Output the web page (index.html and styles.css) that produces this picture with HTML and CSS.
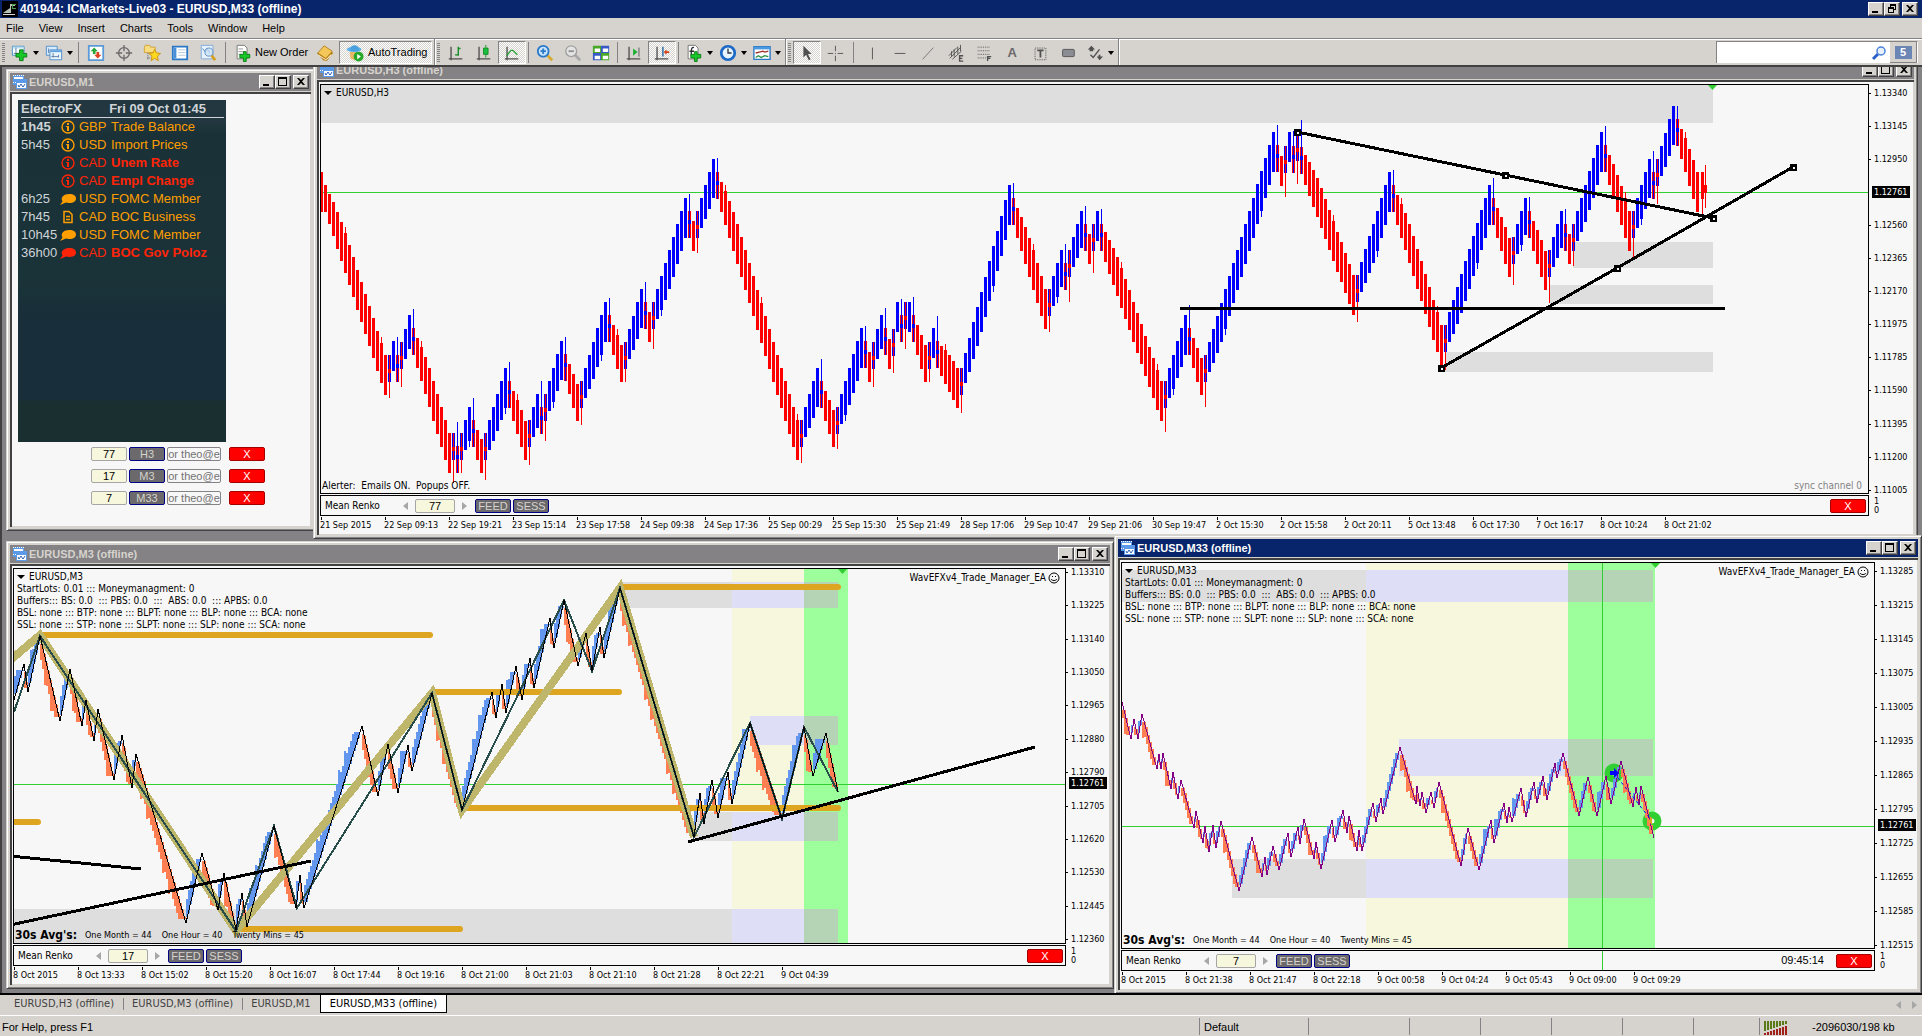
FILE: index.html
```html
<!DOCTYPE html>
<html lang="en">
<head>
<meta charset="utf-8">
<title>401944: ICMarkets-Live03 - EURUSD,M33 (offline)</title>
<link rel="stylesheet" href="styles.css">
</head>
<body>
<svg class="defs" aria-hidden="true">
  <symbol id="i-chart" viewBox="0 0 16 16"><path fill="#5a9ae8" d="M1 1h11v4h3v10H4v-4H1z"/><path fill="#fff" d="M2 3h9v2H2zM5 9h9v5H5z"/><path fill="none" stroke="#2a62b8" d="M6 11l1 2 2-3 2 3 2-3"/><path stroke="#fff" stroke-dasharray="1 1" d="M1 1.500h11M1 8.500h4"/></symbol>
  <symbol id="i-min" viewBox="0 0 12 10"><path d="M2 7h6v2H2z"/></symbol>
  <symbol id="i-max" viewBox="0 0 12 10"><path fill-rule="evenodd" d="M1 0h9v9H1zM2 2v6h7V2z"/></symbol>
  <symbol id="i-restore" viewBox="0 0 12 10"><path fill-rule="evenodd" d="M4 0h6v6H8v3H2V3h2zM5 2v1h3v2h1V2zM3 5v3h4V5z"/></symbol>
  <symbol id="i-close" viewBox="0 0 12 10"><path d="M2 1h2l2 2 2-2h2L7 4.500 10 8H8L6 6 4 8H2l3-3.500z"/></symbol>
  <symbol id="i-info" viewBox="0 0 16 16"><circle cx="8" cy="8" r="6" fill="none" stroke="currentColor" stroke-width="1.400"/><path fill="currentColor" d="M7 4h2v2H7zM6 7h3v5H7V8H6z"/></symbol>
  <symbol id="i-talk" viewBox="0 0 16 16"><path fill="currentColor" d="M9 3c5 0 7 2 7 4.500S14 12 9 12c-1 0-2-.1-3-.4L0 14l2.500-3.500C0 6.500 4 3 9 3z"/></symbol>
  <symbol id="i-doc" viewBox="0 0 16 16"><path fill="none" stroke="currentColor" stroke-width="1.500" d="M4 2.500h5l3 3v8H4zM6 7.500h4M6 10.500h4"/></symbol>
  <symbol id="i-smile" viewBox="0 0 12 12"><circle cx="6" cy="6" r="5" fill="none" stroke="#000"/><path d="M4 4h1v1H4zM7 4h1v1H7z"/><path fill="none" stroke="#000" d="M3 7c1 2 5 2 6 0"/></symbol>
</svg>

<header class="titlebar">
  <svg class="logo" viewBox="0 0 16 16"><path fill="#000" d="M0 0h16v16H0z"/><path fill="#b8c4b8" d="M1 12l7-5v5zM8 3h5v2H9v7H8z"/><path fill="#48a048" d="M10 3h4v1h-3v3h3v1h-4z"/><path stroke="#d8d8d8" d="M1 13.500h12"/></svg>
  <h1>401944: ICMarkets-Live03 - EURUSD,M33 (offline)</h1>
  <div class="caps">
    <button aria-label="Minimize"><svg><use href="#i-min"/></svg></button><button aria-label="Restore"><svg><use href="#i-restore"/></svg></button><button aria-label="Close" class="x"><svg><use href="#i-close"/></svg></button>
  </div>
</header>

<nav class="menu"><a href="#">File</a><a href="#">View</a><a href="#">Insert</a><a href="#">Charts</a><a href="#">Tools</a><a href="#">Window</a><a href="#">Help</a></nav>

<div class="toolbar">
  <div class="group standard">
    <i class="grip"></i>
    <button class="tb drop" aria-label="New chart"><svg viewBox="0 0 20 20"><path fill="#fff" stroke="#3a8ac0" d="M1.500 2.500h13v10h-13z"/><path fill="#bcdcf4" d="M2 3h12v2H2z"/><path fill="none" stroke="#4a7aa0" d="M5.500 4v7M3 10.500h6"/><path fill="#18c828" stroke="#0a7a14" d="M9.500 6.500h4v4h4v4h-4v4h-4v-4h-4v-4h4z"/></svg></button>
    <button class="tb drop" aria-label="Profiles"><svg viewBox="0 0 20 20"><path fill="#d8ecfc" stroke="#4a8ac8" d="M1.500 2.500h12v10h-12z"/><path fill="#e8f4fe" stroke="#4a8ac8" d="M5.500 6.500h13v11h-13z"/><path fill="#5aa0e0" d="M6 7h12v2H6z"/><path fill="none" stroke="#5a7aa0" d="M4 5v5M9 15V10m-2 4h8m0-2v3"/></svg></button>
    <i class="sep"></i>
    <button class="tb" aria-label="Market Watch"><svg viewBox="0 0 20 20"><path fill="#fff" stroke="#5a9ad8" stroke-width="2" d="M2 2h16v16H2z"/><path fill="#28a838" d="M4 8l4-4 4 4H9.500v3h-3V8z"/><path fill="#e04020" d="M8 12l4 4 4-4h-2.500V9h-3v3z"/></svg></button>
    <button class="tb" aria-label="Data Window"><svg viewBox="0 0 20 20"><circle cx="10" cy="10" r="6" fill="none" stroke="#6b696b" stroke-width="1.500"/><path stroke="#6b696b" stroke-width="1.500" d="M10 1v7M10 12v7M1 10h7M12 10h7"/></svg></button>
    <button class="tb" aria-label="Navigator"><svg viewBox="0 0 20 20"><path fill="#f8dc80" stroke="#d0a030" d="M1.500 3.500l1-2h5l1 2h5v6h-12z"/><path stroke="#505050" stroke-dasharray="1 1" d="M5.500 10v8M5 15.500h4"/><path fill="#ffd820" stroke="#c89010" d="M13 6l2 4 4.500.5-3.500 3 1 5-4-2.500-4 2.500 1-5-3.500-3L11 10z"/></svg></button>
    <button class="tb" aria-label="Terminal"><svg viewBox="0 0 20 20"><path fill="#fff" stroke="#2a78c8" stroke-width="2" d="M2 3h16v14H2z"/><path fill="#4a90d8" d="M3 4h3v12H3z"/><path stroke="#b0c4d8" d="M8 6.500h8M8 9.500h8M8 12.500h8"/></svg></button>
    <button class="tb" aria-label="Strategy Tester"><svg viewBox="0 0 20 20"><path fill="#e8f2fc" stroke="#7aa8d8" d="M2.500 1.500h13v15h-13z"/><path fill="none" stroke="#4a80b8" d="M4 5l3 4 2-4 3 5"/><circle cx="11" cy="9" r="4.500" fill="#c8e0f8" fill-opacity=".7" stroke="#6090c0"/><path stroke="#d8a020" stroke-width="3" d="M14 13l4 5"/></svg></button>
    <i class="sep"></i>
    <button class="tb text"><svg viewBox="0 0 20 20"><path fill="#fff" stroke="#707070" d="M3.500 1.500h8l3 3v12h-11z"/><path stroke="#909090" d="M5 5.500h5M5 8.500h7M5 11.500h4"/><path fill="#18c828" stroke="#0a7a14" d="M10.500 8.500h3v3h4v4h-4v4h-3v-4h-4v-4h4z"/></svg>New Order</button>
    <button class="tb" aria-label="MetaEditor"><svg viewBox="0 0 20 20"><path fill="#b87c10" d="M1 10l7 8 4 1 7-9-2-2z"/><path fill="#fff0c8" d="M3 12l8 5 6-6v2l-6 5-8-5z"/><path fill="#f4c858" stroke="#b08020" d="M2 10l7-8 9 6-7 8z"/></svg></button>
    <button class="tb text pressed auto" aria-pressed="true"><svg viewBox="0 0 20 20"><ellipse cx="9" cy="6" rx="8" ry="3" fill="#5ab0e8"/><path fill="#48a0e0" d="M5 5c0-5 9-5 9 0v3H5z"/><path fill="#e8b868" d="M4 9h10l-1 6-4 3-4-2z"/><circle cx="14" cy="14" r="5.500" fill="#28a828"/><path fill="#fff" d="M12.500 11v6l4-3z"/></svg>AutoTrading</button>
  </div>
  <div class="group">
    <i class="grip"></i>
    <button class="tb" aria-label="Bar chart"><svg viewBox="0 0 20 20"><path fill="none" stroke="#505050" stroke-width="1.500" d="M4.500 3v15M2 16.500h15"/><path fill="none" stroke="#108a20" stroke-width="1.500" d="M12.500 3v10M9 12h4M12 5h3"/></svg></button>
    <button class="tb" aria-label="Candlesticks"><svg viewBox="0 0 20 20"><path fill="none" stroke="#505050" stroke-width="1.500" d="M4.500 3v15M2 16.500h15"/><path fill="#18c040" stroke="#108a20" d="M9.500 4.500h5v7h-5zM12 1v3M12 12v3"/></svg></button>
    <button class="tb pressed" aria-label="Line chart" aria-pressed="true"><svg viewBox="0 0 20 20"><path fill="none" stroke="#505050" stroke-width="1.500" d="M4.500 3v15M2 16.500h15"/><path fill="none" stroke="#28a038" stroke-width="1.500" d="M4 13l5-6h2l5 5"/></svg></button>
    <i class="sep"></i>
    <button class="tb" aria-label="Zoom in"><svg viewBox="0 0 20 20"><path stroke="#d8a830" stroke-width="3" d="M12 12l6 6"/><circle cx="8" cy="8" r="6" fill="#c8e4fc" stroke="#2a78c8" stroke-width="2"/><path stroke="#2a78c8" stroke-width="2" d="M5 8h6M8 5v6"/></svg></button>
    <button class="tb" aria-label="Zoom out"><svg viewBox="0 0 20 20"><path stroke="#a8a8a8" stroke-width="3" d="M12 12l6 6"/><circle cx="8" cy="8" r="6" fill="#e4e4e4" stroke="#a0a0a0" stroke-width="1.500"/><path stroke="#909090" stroke-width="2" d="M5 8h6"/></svg></button>
    <button class="tb" aria-label="Tile windows"><svg viewBox="0 0 20 20"><path fill="#48a828" d="M1 2h9v8H1zM10 10h9v8h-9z"/><path fill="#3858c8" d="M10 2h9v8h-9zM1 10h9v8H1z"/><path fill="#fff" d="M3 5h6v4H3zM12 5h6v4h-6zM3 13h6v4H3zM12 13h6v4h-6z"/></svg></button>
    <i class="sep"></i>
    <button class="tb" aria-label="Auto scroll"><svg viewBox="0 0 20 20"><path fill="none" stroke="#505050" stroke-width="1.500" d="M4.500 3v15M2 16.500h15"/><path fill="#18b030" d="M9 5v8l5-4z"/><path stroke="#505050" d="M15.500 4v10"/></svg></button>
    <button class="tb pressed" aria-label="Chart shift" aria-pressed="true"><svg viewBox="0 0 20 20"><path fill="none" stroke="#505050" stroke-width="1.500" d="M4.500 3v15M2 16.500h15"/><path stroke="#1a60a0" stroke-width="1.500" d="M11 3v11"/><path fill="#d04010" d="M12 9l3-3v2h3v2h-3v2z"/></svg></button>
    <i class="sep"></i>
    <button class="tb drop" aria-label="Indicators"><svg viewBox="0 0 20 20"><path fill="#fff" stroke="#707070" d="M3.500 1.500h8l3 3v12h-11z"/><path fill="none" stroke="#303030" stroke-width="1.500" d="M10 4c-3-1-3 2-3 9M5 8h5"/><path fill="#18c828" stroke="#0a7a14" d="M10.500 8.500h3v3h4v4h-4v4h-3v-4h-4v-4h4z"/></svg></button>
    <button class="tb drop" aria-label="Periods"><svg viewBox="0 0 20 20"><circle cx="10" cy="10" r="7.500" fill="#e8f4fe" stroke="#1a68c8" stroke-width="3"/><path fill="none" stroke="#303840" stroke-width="1.500" d="M10 5v5h4"/></svg></button>
    <button class="tb drop" aria-label="Templates"><svg viewBox="0 0 20 20"><path fill="#fff" stroke="#2a78c8" stroke-width="1.500" d="M1 3h18v14H1z"/><path fill="#4a98e0" d="M1 3h18v3H1z"/><path fill="none" stroke="#a03020" stroke-width="1.500" d="M3 10l4-1 4-1 2 1 4-1"/><path fill="none" stroke="#28903a" stroke-width="1.500" d="M3 15l3-2 3 2 4-2 4 1"/></svg></button>
  </div>
  <div class="group drawing">
    <i class="grip"></i>
    <button class="tb pressed" aria-label="Cursor" aria-pressed="true"><svg viewBox="0 0 20 20"><path fill="#505050" d="M6 2l9 9h-4l3 6-2 1-3-6-3 3z"/></svg></button>
    <button class="tb" aria-label="Crosshair"><svg viewBox="0 0 20 20"><path stroke="#505050" d="M10.500 2v6M10.500 13v6M2 10.500h6M13 10.500h6M10 10.500h1"/></svg></button>
    <i class="sep"></i>
    <button class="tb" aria-label="Vertical line"><svg viewBox="0 0 20 20"><path stroke="#505050" d="M10.500 4v13"/></svg></button>
    <button class="tb" aria-label="Horizontal line"><svg viewBox="0 0 20 20"><path stroke="#505050" d="M4 10.500h12"/></svg></button>
    <button class="tb" aria-label="Trendline"><svg viewBox="0 0 20 20"><path stroke="#707070" d="M4 17L16 4"/></svg></button>
    <button class="tb" aria-label="Equidistant channel"><svg viewBox="0 0 20 20"><path fill="none" stroke="#505050" d="M2 13L11 4M3 16L15 4M6 17L16 8M5 8v6M8 6v8M12 3v8M15 1v7"/><path fill="none" stroke="#505050" stroke-width="1.500" d="M18 13h-4v6h4M14 16h3"/></svg></button>
    <button class="tb" aria-label="Fibonacci"><svg viewBox="0 0 20 20"><path stroke="#505050" stroke-dasharray="1 1" d="M3 3.500h14M3 7.500h14M3 11.500h14M3 15.500h9"/><path fill="none" stroke="#505050" stroke-width="1.500" d="M18 14h-4v5M14 16h3"/></svg></button>
    <button class="tb letter" aria-label="Text">A</button>
    <button class="tb" aria-label="Text label"><svg viewBox="0 0 20 20"><path fill="none" stroke="#505050" stroke-dasharray="1 1" d="M4.500 4.500h12v13h-12z"/><path stroke="#505050" stroke-width="2" d="M7 7h7M10.500 7v8"/></svg></button>
    <button class="tb" aria-label="Rectangle"><svg viewBox="0 0 20 20"><rect x="4" y="6" width="13" height="8" rx="1" fill="#8c8c94" stroke="#505050"/></svg></button>
    <button class="tb drop" aria-label="Arrows"><svg viewBox="0 0 20 20"><path fill="#505050" d="M6 2l4 4H8v2H4V6H2zM12 14h2v-2h2v2h3l-4 4z"/><path fill="none" stroke="#505050" stroke-width="1.500" d="M5 12l3 3 7-9"/></svg></button>
  </div>
  <div class="search">
    <input type="text" aria-label="Search">
    <svg viewBox="0 0 16 16"><path stroke="#2a60c8" stroke-width="3" d="M2 14l5-5"/><circle cx="10" cy="6" r="4" fill="#e8f2fe" stroke="#4a80d8" stroke-width="1.500"/></svg>
    <button class="mail" aria-label="Messages"><span>5</span></button>
  </div>
</div>

<main class="mdi">
  <section class="win win-m1">
    <header><svg class="wi"><use href="#i-chart"/></svg><h2>EURUSD,M1</h2>
      <div class="caps"><button aria-label="Minimize"><svg><use href="#i-min"/></svg></button><button aria-label="Maximize"><svg><use href="#i-max"/></svg></button><button aria-label="Close" class="x"><svg><use href="#i-close"/></svg></button></div></header>
    <div class="client">
      <div class="news">
        <div class="news-head"><span>ElectroFX</span><span>Fri 09 Oct 01:45</span></div>
        <table>
          <tr class="mid"><th>1h45</th><td><svg><use href="#i-info"/></svg></td><td>GBP</td><td>Trade Balance</td></tr>
          <tr class="mid"><td>5h45</td><td><svg><use href="#i-info"/></svg></td><td>USD</td><td>Import Prices</td></tr>
          <tr class="high"><td></td><td><svg><use href="#i-info"/></svg></td><td>CAD</td><td>Unem Rate</td></tr>
          <tr class="high"><td></td><td><svg><use href="#i-info"/></svg></td><td>CAD</td><td>Empl Change</td></tr>
          <tr class="mid"><td>6h25</td><td><svg><use href="#i-talk"/></svg></td><td>USD</td><td>FOMC Member</td></tr>
          <tr class="mid"><td>7h45</td><td><svg><use href="#i-doc"/></svg></td><td>CAD</td><td>BOC Business</td></tr>
          <tr class="mid"><td>10h45</td><td><svg><use href="#i-talk"/></svg></td><td>USD</td><td>FOMC Member</td></tr>
          <tr class="high"><td>36h00</td><td><svg><use href="#i-talk"/></svg></td><td>CAD</td><td>BOC Gov Poloz</td></tr>
        </table>
      </div>
      <div class="feeds">
        <div><input class="num" aria-label="H3 size" value="77"><button class="dark">H3</button><input class="addr" aria-label="H3 alert" value="or theo@e"><button class="red">X</button></div>
        <div><input class="num" aria-label="M3 size" value="17"><button class="dark">M3</button><input class="addr" aria-label="M3 alert" value="or theo@e"><button class="red">X</button></div>
        <div><input class="num" aria-label="M33 size" value="7"><button class="dark">M33</button><input class="addr" aria-label="M33 alert" value="or theo@e"><button class="red">X</button></div>
      </div>
    </div>
  </section>

  <section class="win win-h3">
    <header><svg class="wi"><use href="#i-chart"/></svg><h2>EURUSD,H3 (offline)</h2>
      <div class="caps"><button aria-label="Minimize"><svg><use href="#i-min"/></svg></button><button aria-label="Maximize"><svg><use href="#i-max"/></svg></button><button aria-label="Close" class="x"><svg><use href="#i-close"/></svg></button></div></header>
    <div class="client chart">
      <div class="plot">
        <svg id="plot-h3"></svg>
        <div class="sym">EURUSD,H3</div>
        <div class="foot"><span>Alerter:&nbsp; Emails ON.&nbsp; Popups OFF.</span></div>
        <div class="sync">sync channel 0</div>
      </div>
      <ol class="axis"><li>1.13340</li><li>1.13145</li><li>1.12950</li><li class="now">1.12761</li><li>1.12560</li><li>1.12365</li><li>1.12170</li><li>1.11975</li><li>1.11785</li><li>1.11590</li><li>1.11395</li><li>1.11200</li><li>1.11005</li></ol>
      <div class="sub"><label for="n1">Mean Renko</label><button class="step prev" aria-label="Less"></button><input id="n1" class="num" value="77"><button class="step next" aria-label="More"></button><button class="dark">FEED</button><button class="dark">SESS</button><button class="red">X</button></div>
      <div class="scale"><span>1</span><span>0</span></div>
      <ol class="dates"><li>21 Sep 2015</li><li>22 Sep 09:13</li><li>22 Sep 19:21</li><li>23 Sep 15:14</li><li>23 Sep 17:58</li><li>24 Sep 09:38</li><li>24 Sep 17:36</li><li>25 Sep 00:29</li><li>25 Sep 15:30</li><li>25 Sep 21:49</li><li>28 Sep 17:06</li><li>29 Sep 10:47</li><li>29 Sep 21:06</li><li>30 Sep 19:47</li><li>2 Oct 15:30</li><li>2 Oct 15:58</li><li>2 Oct 20:11</li><li>5 Oct 13:48</li><li>6 Oct 17:30</li><li>7 Oct 16:17</li><li>8 Oct 10:24</li><li>8 Oct 21:02</li></ol>
    </div>
  </section>

  <section class="win win-m3">
    <header><svg class="wi"><use href="#i-chart"/></svg><h2>EURUSD,M3 (offline)</h2>
      <div class="caps"><button aria-label="Minimize"><svg><use href="#i-min"/></svg></button><button aria-label="Maximize"><svg><use href="#i-max"/></svg></button><button aria-label="Close" class="x"><svg><use href="#i-close"/></svg></button></div></header>
    <div class="client chart">
      <div class="plot">
        <svg id="plot-m3"></svg>
        <div class="sym">EURUSD,M3</div>
        <div class="notes">StartLots: 0.01 ::: Moneymanagment: 0<br>Buffers::: BS: 0.0 &nbsp;::: PBS: 0.0 &nbsp;::: &nbsp;ABS: 0.0 &nbsp;::: APBS: 0.0<br>BSL: none ::: BTP: none ::: BLPT: none ::: BLP: none ::: BCA: none<br>SSL: none ::: STP: none ::: SLPT: none ::: SLP: none ::: SCA: none</div>
        <div class="ea">WavEFXv4_Trade_Manager_EA<svg><use href="#i-smile"/></svg></div>
        <div class="foot avg"><b>30s Avg's:</b><span>One Month = 44</span><span>One Hour = 40</span><span>Twenty Mins = 45</span></div>
      </div>
      <ol class="axis"><li>1.13310</li><li>1.13225</li><li>1.13140</li><li>1.13050</li><li>1.12965</li><li>1.12880</li><li>1.12790</li><li>1.12705</li><li>1.12620</li><li>1.12530</li><li>1.12445</li><li>1.12360</li><li class="now mark">1.12761</li></ol>
      <div class="sub"><label for="n2">Mean Renko</label><button class="step prev" aria-label="Less"></button><input id="n2" class="num" value="17"><button class="step next" aria-label="More"></button><button class="dark">FEED</button><button class="dark">SESS</button><button class="red">X</button></div>
      <div class="scale"><span>1</span><span>0</span></div>
      <ol class="dates"><li>8 Oct 2015</li><li>8 Oct 13:33</li><li>8 Oct 15:02</li><li>8 Oct 15:20</li><li>8 Oct 16:07</li><li>8 Oct 17:44</li><li>8 Oct 19:16</li><li>8 Oct 21:00</li><li>8 Oct 21:03</li><li>8 Oct 21:10</li><li>8 Oct 21:28</li><li>8 Oct 22:21</li><li>9 Oct 04:39</li></ol>
    </div>
  </section>

  <section class="win win-m33 active">
    <header><svg class="wi"><use href="#i-chart"/></svg><h2>EURUSD,M33 (offline)</h2>
      <div class="caps"><button aria-label="Minimize"><svg><use href="#i-min"/></svg></button><button aria-label="Maximize"><svg><use href="#i-max"/></svg></button><button aria-label="Close" class="x"><svg><use href="#i-close"/></svg></button></div></header>
    <div class="client chart">
      <div class="plot">
        <svg id="plot-m33"></svg>
        <div class="sym">EURUSD,M33</div>
        <div class="notes">StartLots: 0.01 ::: Moneymanagment: 0<br>Buffers::: BS: 0.0 &nbsp;::: PBS: 0.0 &nbsp;::: &nbsp;ABS: 0.0 &nbsp;::: APBS: 0.0<br>BSL: none ::: BTP: none ::: BLPT: none ::: BLP: none ::: BCA: none<br>SSL: none ::: STP: none ::: SLPT: none ::: SLP: none ::: SCA: none</div>
        <div class="ea">WavEFXv4_Trade_Manager_EA<svg><use href="#i-smile"/></svg></div>
        <div class="foot avg"><b>30s Avg's:</b><span>One Month = 44</span><span>One Hour = 40</span><span>Twenty Mins = 45</span></div>
      </div>
      <ol class="axis"><li>1.13285</li><li>1.13215</li><li>1.13145</li><li>1.13075</li><li>1.13005</li><li>1.12935</li><li>1.12865</li><li>1.12795</li><li>1.12725</li><li>1.12655</li><li>1.12585</li><li>1.12515</li><li class="now mark">1.12761</li></ol>
      <div class="sub lined"><label for="n3">Mean Renko</label><button class="step prev" aria-label="Less"></button><input id="n3" class="num" value="7"><button class="step next" aria-label="More"></button><button class="dark">FEED</button><button class="dark">SESS</button><time>09:45:14</time><button class="red">X</button></div>
      <div class="scale"><span>1</span><span>0</span></div>
      <ol class="dates"><li>8 Oct 2015</li><li>8 Oct 21:38</li><li>8 Oct 21:47</li><li>8 Oct 22:18</li><li>9 Oct 00:58</li><li>9 Oct 04:24</li><li>9 Oct 05:43</li><li>9 Oct 09:00</li><li>9 Oct 09:29</li></ol>
    </div>
  </section>
</main>

<nav class="tabs"><a href="#">EURUSD,H3 (offline)</a><a href="#">EURUSD,M3 (offline)</a><a href="#">EURUSD,M1</a><a href="#" class="on">EURUSD,M33 (offline)</a><span class="arrows"><i class="step prev"></i><i class="step next"></i></span></nav>

<footer class="status">
  <span class="help">For Help, press F1</span><span class="w109">Default</span><span class="w101"></span><span class="w71"></span><span class="w71"></span><span class="w71"></span><span class="w71"></span><span class="w66"></span>
  <span class="net"><svg viewBox="0 0 24 14"><path fill="#5a7a18" d="M0 0h2v10H0zM3 0h2v9H3zM6 0h2v8H6zM9 0h2v7H9zM12 0h2v6h-2zM15 0h2v5h-2zM18 0h2v4h-2zM21 0h2v3h-2z"/><path fill="#a02018" d="M0 12h2v2H0zM3 11h2v3H3zM6 10h2v4H6zM9 9h2v5H9zM12 8h2v6h-2zM15 7h2v7h-2zM18 6h2v8h-2zM21 5h2v9h-2z"/></svg>-2096030/198 kb</span>
</footer>
<script src="charts.js"></script>
</body>
</html>
```
FILE: styles.css
```css
:root {
  --face: #d6d3ce;
  --shade: #848284;
  --dark: #424142;
  --navy: #08246b;
  --paper: #f7f7f7;
  --ui: "Liberation Sans", Arial, sans-serif;
  --narrow: Tahoma, "DejaVu Sans Condensed", sans-serif;
}
* { box-sizing: border-box; }
body {
  margin: 0;
  height: 100vh;
  display: flex;
  flex-direction: column;
  overflow: hidden;
  background: var(--face);
  font: 11px/13px var(--ui);
  color: #000;
}
h1, h2, ol { margin: 0; padding: 0; list-style: none; }
h1 { font-size: 12px; line-height: 15px; }
h2 { font-size: 11px; line-height: 15px; }
a { color: inherit; text-decoration: none; }
button, input { font: inherit; margin: 0; padding: 0; border: 0; border-radius: 0; color: inherit; }
button { background: none; }
svg { display: block; flex: none; }
.defs { position: absolute; width: 0; height: 0; }

/* title bar */
.titlebar { flex: none; height: 18px; display: flex; align-items: center; background: var(--navy); color: #fff; padding: 0 4px 0 2px; }
.logo { width: 16px; height: 16px; margin-right: 2px; }
.caps { margin-left: auto; display: flex; }
.caps button {
  width: 16px; height: 14px;
  background: var(--face);
  border: 1px solid;
  border-color: #fff var(--dark) var(--dark) #fff;
  box-shadow: inset -1px -1px var(--shade);
  color: #000;
}
.caps svg { width: 12px; height: 10px; margin: 1px; }
.caps .x { margin-left: 2px; }

.menu { flex: none; height: 20px; display: flex; align-items: center; gap: 15px; padding-left: 6px; }

/* toolbar */
.toolbar { flex: none; height: 27px; display: flex; border-top: 1px solid var(--shade); box-shadow: inset 0 1px #fff; }
.group { display: flex; align-items: center; padding: 1px 2px 0 0; border-right: 1px solid var(--shade); box-shadow: 1px 0 #fff; }
.grip { width: 3px; height: 20px; margin: 0 2px; background: repeating-linear-gradient(var(--shade) 0 1px, transparent 1px 2px); }
.sep { width: 1px; height: 21px; margin: 0 2px; background: var(--shade); }
.standard .sep { margin: 0 3px; }
.drawing .sep { margin: 0 4px; }
.tb { width: 28px; height: 23px; display: flex; align-items: center; justify-content: center; }
.tb svg { width: 18px; height: 18px; }
.drop { width: 34px; justify-content: flex-start; gap: 4px; padding-left: 4px; }
.drop::after { content: ""; border: 3px solid transparent; border-top: 4px solid #000; border-bottom: 0; }
.text { width: auto; gap: 3px; padding: 0 3px 0 5px; }
.auto { width: 93px; gap: 4px; }
.letter { font-weight: bold; font-size: 13px; color: #6b696b; }
.pressed {
  border: 1px solid;
  border-color: var(--shade) #fff #fff var(--shade);
  background: repeating-conic-gradient(#fff 0 25%, var(--face) 0 50%) 0 0 / 2px 2px;
}
.search { width: 202px; margin: 2px 4px 2px auto; display: flex; align-items: center; background: #fff; border: 1px solid var(--shade); border-right-color: #fff; border-bottom: 0; }
.search input { flex: 1; min-width: 0; background: none; outline: 0; }
.search svg { width: 16px; height: 16px; margin: 0 3px; }
.mail { width: 27px; height: 21px; background: var(--face); display: grid; place-items: center; border-right: 1px solid var(--shade); border-bottom: 1px solid var(--shade); }
.mail span { width: 17px; height: 13px; background: #6b86b5; color: #fff; font-weight: bold; }

/* desktop */
.mdi { flex: 1; min-height: 0; position: relative; overflow: hidden; background: var(--shade); border-top: 2px solid var(--dark); border-left: 2px solid var(--dark); }
.win {
  position: absolute;
  display: flex;
  flex-direction: column;
  padding: 3px;
  background: var(--face);
  border: 1px solid;
  border-color: var(--face) var(--dark) var(--dark) var(--face);
  box-shadow: inset 1px 1px #fff, inset -1px -1px var(--shade);
}
.win > header { flex: none; height: 18px; margin-bottom: 1px; display: flex; align-items: center; padding: 0 2px; background: var(--shade); color: var(--face); }
.win.active > header { background: var(--navy); color: #fff; }
.wi { width: 16px; height: 16px; margin-right: 1px; }
.win-m1 { left: 4px; top: 2px; width: 309px; height: 462px; }
.win-h3 { left: 311px; top: -10px; right: 4px; height: 482px; }
.win-m3 { left: 4px; top: 474px; width: 1108px; bottom: 4px; }
.win-m33 { left: 1112px; top: 468px; right: 0; bottom: -1px; }
.client {
  flex: 1; min-height: 0;
  background: var(--paper);
  border: solid var(--dark);
  border-width: 2px 0 0 2px;
  box-shadow: inset -1px -1px #d6d3ce;
}
.win-m1 .client { padding: 6px 0 0 6px; }

/* news calendar */
.news { width: 208px; height: 342px; padding: 0 2px 0 3px; color: #d0d4d8; background: linear-gradient(#22373f 0 22px, #1a3237 34px, #1a3338 180px, #182e3a 220px, #182e3a 300px, #1a2f2f 301px); font-size: 13px; line-height: 18px; }
.news-head { display: flex; justify-content: space-between; padding-right: 18px; height: 18px; border-bottom: 1px solid #d0d4d8; font-weight: bold; }
.news table { border-collapse: collapse; table-layout: fixed; }
.news tr { height: 18px; }
.news td, .news th { padding: 0; text-align: left; white-space: nowrap; height: 18px; }
.news svg { width: 16px; height: 16px; }
.news td:nth-child(2) { width: 19px; }
.news tr > :first-child { width: 39px; color: #d0d4d8; }
.news td:nth-child(3) { width: 32px; }
.mid { color: #ff9e00; }
.high { color: #ff2408; }
.high td:last-child { font-weight: bold; }
.feeds { display: grid; gap: 8px; padding: 5px 0 0 73px; }
.feeds > div { display: flex; gap: 2px; }
.feeds .red { margin-left: 6px; }
.num, .addr, .dark, .red { height: 14px; line-height: 12px; border: 1px solid; border-radius: 2px; text-align: center; }
.num { width: 36px; background: #f7f7de; border-color: #a5a6a5; }
.addr { width: 54px; background: none; border-color: #848284; color: #737173; }
.dark { width: 36px; background: #6b696b; border-color: #000084; color: #d6d3ce; }
.red { width: 36px; background: #f00; border-color: #a50000; color: #fff; }

/* chart windows */
.chart { display: grid; grid-template-columns: minmax(0, 1fr) 42px; grid-template-rows: minmax(0, 1fr) 21px 17px; row-gap: 1px; padding: 2px 1px 1px 1px; font: 10px/13px var(--narrow); }
.win-h3 .chart { grid-template-columns: minmax(0, 1fr) 44px; }
.win-m3 .chart { grid-template-columns: minmax(0, 1fr) 43px; }
.plot { position: relative; border: 1px solid #000; min-height: 0; }
.plot > svg { width: 100%; height: 100%; overflow: hidden; }
.sym { position: absolute; left: 3px; top: 1px; display: flex; align-items: center; gap: 4px; }
.sym::before { content: ""; border: 4px solid transparent; border-top: 4px solid #000; border-bottom: 0; }
.notes { position: absolute; left: 3px; top: 14px; line-height: 12px; white-space: nowrap; }
.ea { position: absolute; right: 5px; top: 2px; display: flex; align-items: center; gap: 2px; }
.ea svg { width: 12px; height: 12px; }
.foot { position: absolute; left: 1px; bottom: 1px; display: flex; align-items: center; gap: 10px; white-space: nowrap; }
.avg { font-size: 9px; }
.foot b { font: bold 12px/13px var(--narrow); margin-right: -2px; }
.sync { position: absolute; right: 6px; bottom: 1px; color: #848284; }
.axis { position: relative; display: flex; flex-direction: column; justify-content: space-between; padding-top: 3px; margin-bottom: -3px; font-size: 9px; }
.win-m3 .axis { padding-top: 0; margin: -2px 0 -2px; }
.axis li { display: flex; align-items: center; gap: 3px; height: 13px; }
.axis li::before { content: ""; width: 2px; height: 1px; background: #000; }
.axis .now { background: #000; color: #fff; margin-left: 3px; width: 38px; padding-left: 2px; height: 12px; }
.axis .now::before { display: none; }
.axis .mark { position: absolute; top: 211px; left: 0; }
.win-m33 .axis .mark { top: 257px; }
.sub { display: flex; align-items: center; border: 1px solid #000; padding: 0 2px 0 4px; font: 11px/13px var(--ui); }
.sub label { width: 78px; font: 10px/13px var(--narrow); }
.sub .num { width: 40px; margin: 0 7px; }
.sub .next { margin-right: 8px; }
.sub .dark { margin-right: 2px; }
.sub .red { margin-left: auto; }
.sub time { margin-left: auto; margin-right: 12px; }
.sub time + .red { margin-left: 0; }
.lined { background: linear-gradient(#31cf31, #31cf31) 480px 0 / 1px 100% no-repeat; }
.step { width: 5px; height: 8px; border: solid transparent; border-width: 4px 5px; }
.prev { border-right-color: #a5a6a5; border-left: 0; }
.next { border-left-color: #a5a6a5; border-right: 0; }
.scale { display: grid; align-content: center; padding-left: 5px; font-size: 9px; line-height: 9px; }
.dates { grid-column: 1 / -1; display: flex; font-size: 9px; }
.dates li { flex: none; width: 64px; padding-top: 2px; white-space: nowrap; background: linear-gradient(#000, #000) 1px 0 / 1px 3px no-repeat; }

/* chart tabs and status bar */
.tabs { flex: none; height: 22px; display: flex; border-top: 2px solid #000; box-shadow: 0 -1px #fff; padding: 0 5px; color: var(--dark); font: 11px/13px var(--narrow); }
.tabs a { padding: 2px 9px; height: 18px; }
.tabs a + a:not(.on) { background: linear-gradient(var(--shade), var(--shade)) 0 3px / 1px 12px no-repeat; }
.tabs .on { background: #fff; color: #000; border: 1px solid #000; border-top: 0; }
.arrows { margin-left: auto; display: flex; gap: 11px; align-items: center; }
.status { flex: none; height: 21px; display: flex; border-top: 1px solid #fff; line-height: 15px; padding-left: 2px; }
.status span { padding: 4px 0 0 4px; border-left: 1px solid var(--shade); margin: 2px 0 1px; line-height: 11px; }
.status .help { flex: 1; border: 0; padding-left: 0; }
.w109 { width: 109px; } .w101 { width: 101px; } .w71 { width: 71px; } .w66 { width: 66px; }
.status .net { width: 163px; display: flex; gap: 24px; }
.net svg { width: 24px; height: 14px; margin-top: -1px; }
```
FILE: charts.js
```js
// Draws the three renko charts. Coordinates are desktop coordinates; each
// plot has an origin that is subtracted by a group transform.
function plot(id, ox, oy) {
  const svg = document.getElementById(id);
  const out = [];
  return {
    rect: (x, y, w, h, c) => out.push(`<rect x="${x}" y="${y}" width="${w}" height="${h}" fill="${c}" shape-rendering="crispEdges"/>`),
    line: (pts, c, w, cap) => out.push(`<polyline points="${pts.map(p => p.join()).join(' ')}" fill="none" stroke="${c}" stroke-width="${w}" ${cap ? `stroke-linecap="${cap}"` : 'shape-rendering="crispEdges"'}/>`),
    raw: s => out.push(s),
    done: () => { svg.innerHTML = `<g transform="translate(${-ox},${-oy})">${out.join('')}</g>`; }
  };
}

// A box behind the chart takes a different tint over each session band.
function zone(p, x0, x1, y0, y1, bandA, bandB) {
  const tint = [[-1e4, bandA, '#dedede'], [bandA, bandB, '#dedef7'], [bandB, 1e4, '#b5d3b5']];
  for (const [a, b, c] of tint) {
    const l = Math.max(a, x0), r = Math.min(b, x1);
    if (r > l) p.rect(l, y0, r - l, y1 - y0, c);
  }
}

// H3: [x, body extreme, wick extreme], alternating high and low
(function () {
  const p = plot('plot-h3', 321, 85);
  for (const [x, y, y2] of [[321, 85, 123], [1573, 242, 268], [1550, 285, 304], [1445, 352, 372]]) p.rect(x, y, 1713 - x, y2 - y, '#dedede');
  p.rect(321, 192, 1600, 1, '#31cf31');
  const piv = [[321,172],[385,395,398],[393,341,337],[397,382,387],[409,315,309],[449,473,483],[453,433,422],[457,473,473],[469,407,398],[481,473,480],[505,368,362],[525,460,465],[537,394,381],[541,434,441],[561,341,337],[577,421,425],[605,302,298],[621,382,382],[641,289,282],[649,342,349],[685,198,194],[693,251,253],[713,159,158],[797,460,463],[817,368,359],[833,447,449],[861,328,326],[869,382,387],[881,315,308],[889,369,373],[897,302,299],[901,342,349],[909,302,297],[925,382,382],[933,328,316],[957,408,413],[1009,185,183],[1045,329,332],[1061,250,244],[1065,290,302],[1081,211,206],[1089,264,273],[1097,211,209],[1161,421,432],[1185,315,305],[1201,395,407],[1273,132,125],[1281,186,197],[1289,132,131],[1293,173,184],[1297,134,120],[1353,315,322],[1389,172,170],[1441,365,370],[1489,185,178],[1509,277,285],[1525,198,197],[1545,290,303],[1561,211,209],[1569,264,266],[1601,132,126],[1629,251,258],[1649,159,151],[1653,199,204],[1673,106,106],[1697,212,214]];
  const H = [27, 30, 34, 37, 39];
  p.rect(320, 172, 3, 40, '#f00');
  for (let i = 1; i < piv.length; i++) {
    const down = i % 2 === 1, [x0, y0] = piv[i - 1], [x1, y1] = piv[i];
    const n = Math.round((x1 - x0) / 4), c = down ? '#f00' : '#00f';
    const first = y0 + (down ? 40 : -40);
    for (let k = 1; k <= n; k++) {
      const e = n === 1 ? y1 : Math.round(first + (y1 - first) * (k - 1) / (n - 1));
      const h = H[k - 1] || 40, x = Math.round(x0 + (x1 - x0) * k / n);
      p.rect(x - 1, down ? e - h : e, 3, h, c);
      if (k === 1 && i > 1) {
        const pw = piv[i - 1][2];
        p.rect(x, Math.min(e, pw), 1, Math.abs(e - pw), down ? '#00f' : '#f00');
        p.rect(x - 1, down ? e - 18 : e + 14, 3, 4, down ? '#00f' : '#f00');
      } else if ((k * 7 + i * 3) % 9 === 0) p.rect(x, down ? e - h - 6 : e + h, 1, 6, c);
    }
  }
  p.rect(1701, 172, 3, 27, '#f00'); p.rect(1702, 172, 1, 42, '#f00');
  p.rect(1704, 185, 3, 8, '#f00'); p.rect(1705, 165, 1, 43, '#f00');
  p.rect(1180, 307, 545, 3, '#000');
  const a = [[1297, 132], [1505, 175], [1713, 218]], b = [[1441, 368], [1617, 268], [1793, 167]];
  p.line(a, '#000', 3); p.line(b, '#000', 3);
  for (const [x, y] of [...a, ...b]) { p.rect(x - 3, y - 3, 7, 7, '#000'); p.rect(x, y, 2, 2, '#f7f7f7'); }
  p.raw('<path d="M1708 85h9l-4.500 5z" fill="#31cf31"/>');
  p.done();
})();

// Thin bars that trail a zigzag on its inner side
function trail(p, z, h, lead) {
  for (let i = 1; i < z.length; i++) {
    const [x0, y0] = z[i - 1], [x1, y1] = z[i], down = y1 > y0, c = down ? '#ff7f52' : '#6396ef';
    for (let x = x0 + 1; x < x1; x += 2) {
      const y = y0 + (y1 - y0) * (x - x0) / (x1 - x0), j = (x * 13 + i * 5) % 11 < 2 ? 8 : 0;
      const t = down ? Math.max(y - lead, y0 + 8) : Math.max(y1 + 6, y - h - j);
      const b = down ? Math.min(y1 - 4, y + h + j) : Math.min(y + lead, y0 - 6);
      if (b > t) p.rect(Math.round(x) - 1, Math.round(t), 2, Math.round(b - t), c);
    }
  }
}

// M3
(function () {
  const p = plot('plot-m3', 14, 569), A = 732, B = 804;
  p.rect(A, 560, B - A, 400, '#f7f7de');
  p.rect(B, 560, 44, 400, '#9cff9c');
  zone(p, 620, 838, 582, 608, A, B); zone(p, 750, 838, 716, 745, A, B);
  zone(p, 694, 838, 812, 841, A, B); zone(p, 0, 838, 909, 950, A, B);
  p.rect(14, 784, 1060, 1, '#31cf31');
  const z = [[14,700],[24,664],[28,692],[40,636],[60,721],[70,669],[82,726],[86,700],[94,741],[98,709],[114,780],[122,735],[132,788],[136,754],[186,923],[202,853],[218,910],[224,873],[236,930],[242,893],[247,927],[274,826],[296,908],[300,875],[304,908],[362,726],[378,796],[388,744],[398,793],[408,745],[412,771],[432,693],[462,810],[492,692],[496,718],[502,684],[506,713],[516,666],[522,700],[530,658],[534,688],[550,618],[554,648],[564,600],[578,666],[586,633],[592,671],[600,627],[604,658],[620,588],[694,837],[700,793],[704,824],[712,780],[718,818],[728,772],[732,804],[750,723],[782,819],[804,727],[813,776],[826,733],[838,792]];
  trail(p, z, 20, 3);
  for (const [x0, x1, y] of [[40,430,635],[432,619,692],[620,838,587],[462,838,808],[0,38,822],[240,460,929]]) p.line([[x0, y], [x1, y]], '#dea521', 6, 'round');
  p.line([[8,662],[40,635],[236,931],[432,693],[462,810],[620,588],[694,837]], '#bdb66b', 8);
  p.line([[14,712],[40,636],[236,931],[274,826],[297,908],[432,693],[462,810],[564,600],[592,671],[620,588],[694,837],[750,723],[782,819],[804,727],[838,792]], '#294d4a', 2);
  p.line(z, '#000', 1);
  for (const l of [[[10,856],[141,869]],[[10,925],[311,861]],[[688,842],[1035,747]]]) p.line(l, '#000', 3);
  p.raw('<path d="M838 569h9l-4.500 5z" fill="#31cf31"/>');
  p.done();
})();

(function () {
  const px = x => Math.round(1110 + (x - 1110) * 0.9965);
  const p = plot('plot-m33', 1122, 563), A = px(1367), B = px(1570);
  p.rect(A, 560, B - A, 400, '#f7f7de');
  p.rect(B, 560, 87, 400, '#9cff9c');
  zone(p, 1121, 1653, 570, 602, A, B); zone(p, 1399, 1653, 739, 776, A, B); zone(p, 1232, 1653, 859, 898, A, B);
  p.rect(1121, 826, 800, 1, '#31cf31');
  p.rect(1602, 560, 1, 400, '#31cf31');
  const z = [[1122,702],[1131,739],[1134,719],[1138,739],[1142,714],[1157,769],[1159,754],[1161,769],[1163,753],[1171,789],[1173,772],[1178,799],[1181,780],[1194,828],[1196,811],[1203,843],[1205,826],[1209,852],[1213,825],[1216,848],[1221,821],[1239,891],[1252,837],[1263,877],[1266,857],[1268,875],[1274,846],[1280,870],[1289,833],[1292,857],[1299,827],[1301,844],[1305,819],[1315,859],[1317,842],[1322,869],[1333,820],[1336,842],[1344,810],[1348,833],[1350,816],[1358,851],[1360,830],[1363,851],[1374,803],[1377,822],[1382,798],[1384,814],[1401,747],[1417,804],[1418,786],[1421,806],[1423,792],[1427,813],[1432,792],[1435,808],[1440,782],[1462,866],[1469,828],[1480,870],[1492,820],[1495,843],[1505,803],[1508,823],[1510,807],[1513,822],[1522,788],[1527,817],[1535,782],[1538,803],[1545,776],[1549,800],[1557,763],[1559,778],[1565,753],[1581,816],[1590,777],[1599,816],[1608,776],[1613,804],[1623,761],[1635,807],[1638,787],[1641,805],[1643,786],[1656,838]].map(([x, y]) => [px(x), y]);
  p.raw('<g fill="#f7f7f7" stroke="#31cf31" stroke-width="7"><circle cx="1614" cy="773" r="6"/><circle cx="1652" cy="821" r="6"/></g>');
  trail(p, z, 12, 5);
  p.line(z, '#840084', 1);
  p.raw('<path d="M1614 773L1652 821" stroke="#00f" stroke-dasharray="3 3"/><path d="M1610 771h4v-3l5 5-5 5v-3h-4z" fill="#00f"/><path d="M1648 821l4-4v8z" fill="#dea521"/><path d="M1651 563h9l-4.500 5z" fill="#31cf31"/>');
  p.done();
})();
```
